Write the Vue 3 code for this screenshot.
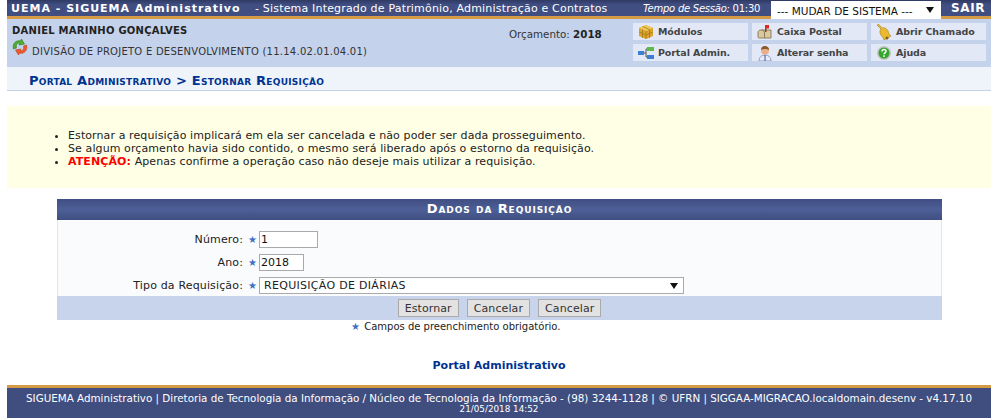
<script setup>
const notes = [
  'Estornar a requisição implicará em ela ser cancelada e não poder ser dada prosseguimento.',
  'Se algum orçamento havia sido contido, o mesmo será liberado após o estorno da requisição.'
]
</script>

<template>
  <div class="page">
    <header class="topbar">
      <strong class="brand">UEMA - SIGUEMA Administrativo</strong>
      <span class="subtitle">- Sistema Integrado de Patrimônio, Administração e Contratos</span>
      <span class="session"><em>Tempo de Sessão:</em> 01:30</span>
      <div class="system">--- MUDAR DE SISTEMA --- <i class="arrow"></i></div>
      <strong class="exit">SAIR</strong>
    </header>

    <section class="info">
      <div class="user">
        <strong class="uname">DANIEL MARINHO GONÇALVES</strong>
        <div class="unit">
          <svg class="swap" viewBox="0 0 16 16" width="16" height="16">
            <path d="M1.500 10C0 5 4 .5 8.500 2L9.500 0l3 5-5.500 1 .8-1.800C5.500 3.500 3.500 6 4.500 9z" fill="#4fae2f" stroke="#2e7a18" stroke-width=".6"/>
            <path d="M14.500 6c1.500 5-2.500 9.500-7 8L6.500 16l-3-5 5.500-1-.8 1.800c2.300.7 4.300-1.800 3.300-4.800z" fill="#ee5a2a" stroke="#c23a18" stroke-width=".6"/>
          </svg>
          <span>DIVISÃO DE PROJETO E DESENVOLVIMENTO (11.14.02.01.04.01)</span>
        </div>
      </div>
      <div class="budget">Orçamento: <strong>2018</strong></div>
      <nav class="menu">
        <a class="item">
          <svg viewBox="0 0 16 16" width="16" height="16"><path d="M1 4l7-3 7 3v8l-7 3-7-3z" fill="#d9a32e"/><path d="M1 4l7 3 7-3-7-3z" fill="#f0c95a"/><path d="M8 7v8M4.500 2.500l7 3M4.500 5.500V14M11.500 5.500V14M1 8l7 3 7-3" stroke="#a87a18" fill="none" stroke-width=".8"/></svg>
          <span>Módulos</span>
        </a>
        <a class="item">
          <svg viewBox="0 0 16 16" width="16" height="16"><path d="M1 9c0-2 1-3 3-3h10v8H2c-1 0-1-1-1-2z" fill="#d8c9a0" stroke="#7d6a45" stroke-width=".8"/><path d="M4.500 6c2 0 3 1.500 3 3v5" stroke="#7d6a45" fill="none" stroke-width=".8"/><path d="M8 1h1.500v7H8z" fill="#8b3a2a"/><path d="M8 1h4v3.500H8z" fill="#dd2a20"/></svg>
          <span>Caixa Postal</span>
        </a>
        <a class="item">
          <svg viewBox="0 0 16 16" width="16" height="16"><path d="M1 1l2-.5 3 3.500c3-1 6 1 7 6l2 2-7 4-1-2.500C4 11 3 7 5 5z" fill="#e9b92f" stroke="#a97d12" stroke-width=".6"/><circle cx="11" cy="14" r="1.500" fill="#8a6410"/></svg>
          <span>Abrir Chamado</span>
        </a>
        <a class="item">
          <svg viewBox="0 0 16 16" width="16" height="16"><path d="M6 8h2M8 4v8M8 4h2M8 12h2" stroke="#555" fill="none"/><rect x="0" y="6" width="6" height="4" fill="#3b7fd4"/><rect x="9" y="2" width="7" height="4" fill="#5dbb48"/><rect x="9" y="10" width="7" height="4" fill="#3b7fd4"/></svg>
          <span>Portal Admin.</span>
        </a>
        <a class="item">
          <svg viewBox="0 0 16 16" width="16" height="16"><path d="M2 16c0-4 3-6 6-6s6 2 6 6z" fill="#e8ecf6" stroke="#6a78b0" stroke-width=".7"/><path d="M8 10v6" stroke="#3a4fa0"/><circle cx="8" cy="5.500" r="4" fill="#e8b08a"/><path d="M4 5c0-3 2-4 4-4s4 1 4 4c-2-1.500-6-1.500-8 0z" fill="#8a5a2c"/></svg>
          <span>Alterar senha</span>
        </a>
        <a class="item">
          <svg viewBox="0 0 16 16" width="16" height="16"><circle cx="8" cy="8" r="7" fill="#bfc5c0"/><circle cx="8" cy="8" r="5.500" fill="#35a52d"/><path d="M6 6.500C6 5 7 4.500 8 4.500s2 .6 2 1.800c0 1.500-2 1.500-2 3" stroke="#fff" stroke-width="1.500" fill="none"/><rect x="7.200" y="10.300" width="1.600" height="1.600" fill="#fff"/></svg>
          <span>Ajuda</span>
        </a>
      </nav>
    </section>

    <div class="crumb"><a>Portal Administrativo</a> &gt; <a>Estornar Requisição</a></div>

    <section class="notice">
      <ul>
        <li v-for="n in notes" :key="n">{{ n }}</li>
        <li><b>ATENÇÃO:</b> Apenas confirme a operação caso não deseje mais utilizar a requisição.</li>
      </ul>
    </section>

    <form class="form" @submit.prevent>
      <h3 class="form-title">Dados da Requisição</h3>
      <div class="form-body">
        <div class="row">
          <label>Número:</label>
          <span class="star">★</span>
          <input class="field w60" value="1" />
        </div>
        <div class="row">
          <label>Ano:</label>
          <span class="star">★</span>
          <input class="field w46" value="2018" />
        </div>
        <div class="row">
          <label>Tipo da Requisição:</label>
          <span class="star">★</span>
          <div class="select">REQUISIÇÃO DE DIÁRIAS<i class="arrow"></i></div>
        </div>
      </div>
      <div class="actions">
        <button type="button">Estornar</button>
        <button type="button">Cancelar</button>
        <button type="button">Cancelar</button>
      </div>
    </form>

    <p class="required"><span class="star">★</span> Campos de preenchimento obrigatório.</p>

    <p class="back">Portal Administrativo</p>

    <footer class="footer">
      <div>SIGUEMA Administrativo | Diretoria de Tecnologia da Informação / Núcleo de Tecnologia da Informação - (98) 3244-1128 | © UFRN | SIGGAA-MIGRACAO.localdomain.desenv - v4.17.10</div>
      <div class="stamp">21/05/2018 14:52</div>
    </footer>
  </div>
</template>

<style>
html, body { margin: 0; background: #fff; }
</style>

<style scoped>
.page {
  width: 984px;
  margin-left: 7px;
  font-family: "DejaVu Sans", Verdana, sans-serif;
  font-size: 11px;
  color: #222;
}
.topbar {
  height: 16px;
  background: linear-gradient(#2f3a63, #404e82 30%);
  border-bottom: 3px solid #d59a45;
  display: flex;
  align-items: center;
  color: #fff;
  padding-left: 4px;
  white-space: nowrap;
}
.brand { font-size: 11px; letter-spacing: 1px; font-weight: 700; width: 244px; flex: none; }
.subtitle { font-size: 11px; width: 388px; flex: none; letter-spacing: .18px; }
.session { font-size: 10px; width: 128px; flex: none; letter-spacing: -.25px; }
.system {
  width: 170px;
  height: 18px;
  margin-top: 1px;
  box-sizing: border-box;
  padding: 4px 0 0 6px;
  background: #fff;
  color: #111;
  font-size: 10.500px;
  position: relative;
  z-index: 1;
  align-self: flex-start;
  flex: none;
}
.arrow {
  position: absolute;
  right: 7px;
  top: 6px;
  border: 4px solid transparent;
  border-top: 6px solid #111;
  border-bottom: 0;
}
.exit { margin-left: 10px; font-size: 12px; letter-spacing: .6px; flex: none; }
.info {
  height: 48px;
  background: #c4d2eb;
  display: flex;
}
.user { width: 490px; padding: 5px 0 0 5px; box-sizing: border-box; flex: none; }
.uname { font-size: 10px; color: #222; display: block; line-height: 13px; letter-spacing: .25px; }
.unit { display: flex; align-items: flex-end; margin-top: 2px; font-size: 10px; color: #333; line-height: 13px; letter-spacing: .25px; }
.swap { margin-right: 4px; }
.unit span { position: relative; top: 3px; }
.budget { width: 124px; padding-top: 8px; box-sizing: border-box; font-size: 10.300px; line-height: 14px; color: #333; margin-left: 12px; flex: none; }
.budget strong { color: #222; }
.menu {
  display: grid;
  grid-template-columns: repeat(3, 115px);
  grid-auto-rows: 17px;
  column-gap: 4px;
  row-gap: 4px;
  padding-top: 4px;
}
.item {
  background: #e2e8f5;
  display: flex;
  align-items: center;
  padding-left: 5px;
  gap: 4px;
  font-size: 9.500px;
  font-weight: 700;
  color: #444;
  letter-spacing: -.1px;
}
.crumb {
  height: 23px;
  line-height: 27px;
  background: #eff3fa;
  border-bottom: 1px solid #c4d2eb;
  padding-left: 22px;
  font-size: 13px;
  letter-spacing: .25px;
  font-weight: 700;
  font-variant: small-caps;
  color: #003390;
}
.notice {
  margin-top: 15px;
  height: 82px;
  background: #ffffe5;
  box-sizing: border-box;
  padding-top: 23px;
}
.notice ul { margin: 0; padding: 0 0 0 61px; list-style: disc; }
.notice li { font-size: 11px; line-height: 13px; color: #222; letter-spacing: .1px; }
.notice b { color: #f00; }
.form { width: 885px; margin: 11px 0 0 50px; }
.form-title {
  margin: 0;
  height: 21px;
  line-height: 20px;
  background: linear-gradient(#404e82, #4d5f96 50%, #404e82);
  color: #fff;
  text-align: center;
  font-size: 13px;
  font-weight: 700;
  font-variant: small-caps;
  letter-spacing: .9px;
}
.form-body {
  background: #f9fbfd;
  height: 76px;
  padding-top: 8px;
  box-sizing: border-box;
  border: solid #e6e6e6;
  border-width: 0 1px;
}
.row { display: flex; align-items: center; height: 23px; }
.row label { width: 185px; text-align: right; font-size: 11px; color: #222; letter-spacing: .15px; }
.star { color: #3f6fc4; font-size: 10px; width: 11px; text-align: center; margin: 0 1px 0 4px; }
.field {
  box-sizing: border-box;
  height: 17px;
  border: 1px solid #aaa;
  padding: 0 1px;
  font: 11px "DejaVu Sans", sans-serif;
  color: #111;
  background: #fff;
}
.w60 { width: 59px; }
.w46 { width: 45px; }
.select {
  position: relative;
  box-sizing: border-box;
  width: 425px;
  height: 17px;
  line-height: 15px;
  border: 1px solid #aaa;
  background: #fff;
  padding-left: 4px;
  font-size: 11px;
  letter-spacing: .3px;
  color: #222;
}
.select .arrow { top: 5px; right: 5px; }
.actions {
  height: 24px;
  background: #c8d4ec;
  display: flex;
  justify-content: center;
  align-items: center;
  gap: 8px;
}
.actions button {
  height: 18px;
  padding: 0 6px;
  border: 1px solid #aaa;
  background: #e2e2e2;
  font: 11px "DejaVu Sans", sans-serif;
  color: #333;
  letter-spacing: .1px;
}
.required { margin: 1px 0 0 343px; font-size: 10px; line-height: 12px; color: #222; }
.required .star { margin: 0; display: inline-block; }
.back {
  margin: 26px 0 0;
  text-align: center;
  font-size: 11px;
  line-height: 14px;
  font-weight: 700;
  color: #003390;
}
.footer {
  margin-top: 12px;
  background: #404e7f;
  border-top: 3px solid #d59a45;
  color: #fff;
  text-align: center;
  font-size: 10.350px;
  padding-top: 4px;
  line-height: 13px;
  height: 26px;
}
.stamp { font-size: 8.800px; line-height: 9px; }
</style>
